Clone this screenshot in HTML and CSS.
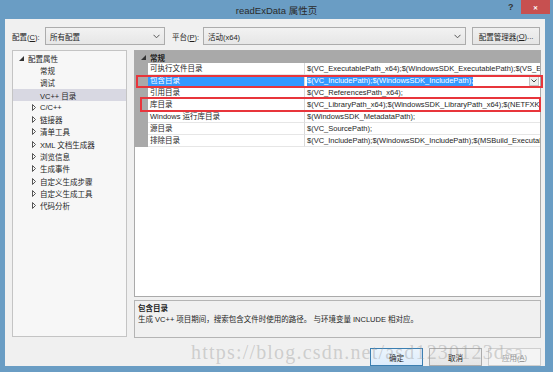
FILE: index.html
```html
<!DOCTYPE html>
<html lang="zh-CN">
  <head>
    <meta charset="UTF-8" />
    <title>readExData 属性页</title>
    <link rel="stylesheet" href="styles.css">
  </head>
  <body>
    <div class="window">
      <div class="titlebar">
        <span class="title">readExData 属性页</span>
        <span class="help">?</span>
        <span class="close">&#x2715;</span>
      </div>
      <div class="client">
        <div class="toolbar">
          <span class="label label-config">配置(<u>C</u>):</span>
          <div class="combo combo-config">
            <span>所有配置</span>
            <svg width="7" height="5" viewBox="0 0 7 5"><path d="M0.5 0.8 L3.5 3.8 L6.5 0.8" fill="none" stroke="#555" stroke-width="1"/></svg>
          </div>
          <span class="label label-platform">平台(<u>P</u>):</span>
          <div class="combo combo-platform">
            <span>活动(x64)</span>
            <svg width="7" height="5" viewBox="0 0 7 5"><path d="M0.5 0.8 L3.5 3.8 L6.5 0.8" fill="none" stroke="#555" stroke-width="1"/></svg>
          </div>
          <div class="btn btn-manager">配置管理器(<u>O</u>)...</div>
        </div>

        <div class="main">
          <div class="tree">
            <div class="node node-root">
              <svg class="exp" width="5" height="5" viewBox="0 0 5 5"><path d="M5 0 L5 5 L0 5 Z" fill="#333"/></svg>
              <span>配置属性</span>
            </div>
            <div class="node leaf">常规</div>
            <div class="node leaf">调试</div>
            <div class="node leaf selected">VC++ 目录</div>
            <div class="node"><svg class="col" width="4" height="7" viewBox="0 0 4 7"><path d="M0.5 0.5 L3.5 3.5 L0.5 6.5 Z" fill="none" stroke="#555" stroke-width="1"/></svg><span>C/C++</span></div>
            <div class="node"><svg class="col" width="4" height="7" viewBox="0 0 4 7"><path d="M0.5 0.5 L3.5 3.5 L0.5 6.5 Z" fill="none" stroke="#555" stroke-width="1"/></svg><span>链接器</span></div>
            <div class="node"><svg class="col" width="4" height="7" viewBox="0 0 4 7"><path d="M0.5 0.5 L3.5 3.5 L0.5 6.5 Z" fill="none" stroke="#555" stroke-width="1"/></svg><span>清单工具</span></div>
            <div class="node"><svg class="col" width="4" height="7" viewBox="0 0 4 7"><path d="M0.5 0.5 L3.5 3.5 L0.5 6.5 Z" fill="none" stroke="#555" stroke-width="1"/></svg><span>XML 文档生成器</span></div>
            <div class="node"><svg class="col" width="4" height="7" viewBox="0 0 4 7"><path d="M0.5 0.5 L3.5 3.5 L0.5 6.5 Z" fill="none" stroke="#555" stroke-width="1"/></svg><span>浏览信息</span></div>
            <div class="node"><svg class="col" width="4" height="7" viewBox="0 0 4 7"><path d="M0.5 0.5 L3.5 3.5 L0.5 6.5 Z" fill="none" stroke="#555" stroke-width="1"/></svg><span>生成事件</span></div>
            <div class="node"><svg class="col" width="4" height="7" viewBox="0 0 4 7"><path d="M0.5 0.5 L3.5 3.5 L0.5 6.5 Z" fill="none" stroke="#555" stroke-width="1"/></svg><span>自定义生成步骤</span></div>
            <div class="node"><svg class="col" width="4" height="7" viewBox="0 0 4 7"><path d="M0.5 0.5 L3.5 3.5 L0.5 6.5 Z" fill="none" stroke="#555" stroke-width="1"/></svg><span>自定义生成工具</span></div>
            <div class="node"><svg class="col" width="4" height="7" viewBox="0 0 4 7"><path d="M0.5 0.5 L3.5 3.5 L0.5 6.5 Z" fill="none" stroke="#555" stroke-width="1"/></svg><span>代码分析</span></div>
          </div>

          <div class="right">
            <div class="grid">
              <div class="grid-head">
                <svg class="head-exp" width="5" height="5" viewBox="0 0 5 5"><path d="M5 0 L5 5 L0 5 Z" fill="#333"/></svg>
                <span>常规</span>
              </div>
              <div class="row">
                <div class="gutter"></div>
                <div class="name">可执行文件目录</div>
                <div class="value">$(VC_ExecutablePath_x64);$(WindowsSDK_ExecutablePath);$(VS_ExecutablePath);$(MSBuild_ExecutablePath)</div>
              </div>
              <div class="row row-selected">
                <div class="gutter"></div>
                <div class="name">包含目录</div>
                <div class="value">
                  <span class="sel-text">$(VC_IncludePath);$(WindowsSDK_IncludePath);</span>
                  <span class="drop">
                    <svg width="6" height="4" viewBox="0 0 6 4"><path d="M0.5 0.5 L3 3 L5.5 0.5" fill="none" stroke="#444" stroke-width="1"/></svg>
                  </span>
                </div>
              </div>
              <div class="row">
                <div class="gutter"></div>
                <div class="name">引用目录</div>
                <div class="value">$(VC_ReferencesPath_x64);</div>
              </div>
              <div class="row">
                <div class="gutter"></div>
                <div class="name">库目录</div>
                <div class="value">$(VC_LibraryPath_x64);$(WindowsSDK_LibraryPath_x64);$(NETFXKitsDir)Lib\um\x64</div>
              </div>
              <div class="row">
                <div class="gutter"></div>
                <div class="name">Windows 运行库目录</div>
                <div class="value">$(WindowsSDK_MetadataPath);</div>
              </div>
              <div class="row">
                <div class="gutter"></div>
                <div class="name">源目录</div>
                <div class="value">$(VC_SourcePath);</div>
              </div>
              <div class="row">
                <div class="gutter"></div>
                <div class="name">排除目录</div>
                <div class="value">$(VC_IncludePath);$(WindowsSDK_IncludePath);$(MSBuild_ExecutablePath);$(VC_LibraryPath_x64)</div>
              </div>
              <div class="grid-fill"></div>
            </div>
            <div class="desc">
              <div class="desc-title">包含目录</div>
              <div class="desc-text">生成 VC++ 项目期间，搜索包含文件时使用的路径。 与环境变量 INCLUDE 相对应。</div>
            </div>
          </div>
        </div>

        <div class="buttons">
          <div class="btn btn-ok">确定</div>
          <div class="btn btn-cancel">取消</div>
          <div class="btn btn-apply">应用(<u>A</u>)</div>
        </div>
      </div>

      <div class="mark mark-include"></div>
      <div class="mark mark-lib"></div>
      <div class="watermark">https://blog.csdn.net/asd1230123dsa</div>
    </div>
  </body>
</html>
```

FILE: styles.css
```css
* {
  padding: 0;
  margin: 0;
  box-sizing: border-box;
}
body {
  width: 553px;
  height: 372px;
  overflow: hidden;
  font-family: "Liberation Sans", "Noto Sans CJK SC", sans-serif;
  font-size: 7.5px;
  color: #1e1e1e;
}
u {
  text-decoration: underline;
}
.window {
  position: relative;
  width: 553px;
  height: 372px;
  background: #6a9dc4;
  display: flex;
  flex-direction: column;
}

/* title bar */
.titlebar {
  position: relative;
  height: 19px;
  display: flex;
  justify-content: center;
  align-items: center;
}
.title {
  font-size: 9.5px;
  color: #2b2b2b;
  padding-top: 1px;
}
.help {
  position: absolute;
  left: 508px;
  top: 2px;
  font-size: 9px;
  font-weight: bold;
  color: #333;
}
.close {
  position: absolute;
  left: 521px;
  top: 0;
  width: 29px;
  height: 14px;
  background: #c75050;
  color: #fff;
  font-size: 6px;
  font-weight: bold;
  display: flex;
  justify-content: center;
  align-items: center;
}

/* client area */
.client {
  flex: 1;
  margin: 0 8px 6px 5px;
  background: #f0f0f0;
  display: flex;
  flex-direction: column;
}
.toolbar {
  display: flex;
  align-items: center;
  height: 18px;
  margin-top: 8px;
  padding-left: 7px;
}
.label {
  color: #1e1e1e;
}
.label-config {
  width: 33px;
}
.label-platform {
  margin-left: 7px;
  width: 31px;
}
.combo {
  height: 18px;
  border: 1px solid #acacac;
  background: linear-gradient(#f2f2f2, #e6e6e6);
  display: flex;
  align-items: center;
  justify-content: space-between;
  padding: 0 4px 0 4px;
}
.combo-config {
  width: 120px;
}
.combo-platform {
  width: 263px;
}
.btn {
  height: 18px;
  border: 1px solid #acacac;
  background: linear-gradient(#f0f0f0, #e5e5e5);
  display: flex;
  align-items: center;
  justify-content: center;
}
.btn-manager {
  width: 68px;
  margin-left: 6px;
}

/* main area */
.main {
  display: flex;
  margin-top: 5px;
  padding-left: 7px;
}
.tree {
  width: 115px;
  height: 287px;
  border: 1px solid #c4c4c4;
  background: #f7f7f7;
  padding-top: 1px;
}
.node {
  height: 12.3px;
  display: flex;
  align-items: center;
  padding-left: 19px;
}
.node span {
  margin-left: 4px;
}
.node-root {
  padding-left: 6px;
}
.node-root span {
  margin-left: 4px;
}
.leaf {
  padding-left: 27px;
}
.selected {
  background: #d8d8e2;
}
.col {
  flex-shrink: 0;
}

.right {
  width: 407px;
  margin-left: 7px;
  display: flex;
  flex-direction: column;
}
.grid {
  height: 247px;
  border: 1px solid #aaa;
  background: #fff;
  display: flex;
  flex-direction: column;
}
.grid-head {
  height: 12px;
  background: #a9a9a9;
  display: flex;
  align-items: center;
  padding-left: 6px;
  font-weight: bold;
  flex-shrink: 0;
}
.grid-head span {
  margin-left: 4px;
}
.row {
  display: grid;
  grid-template-columns: 13px 157px 1fr;
  height: 12px;
  flex-shrink: 0;
}
.gutter {
  background: #a9a9a9;
}
.name {
  padding-left: 2px;
  border-bottom: 1px solid #e6e6e6;
  border-right: 1px solid #d9d9d9;
  white-space: nowrap;
  overflow: hidden;
  line-height: 11px;
}
.value {
  padding-left: 2px;
  border-bottom: 1px solid #e6e6e6;
  white-space: nowrap;
  overflow: hidden;
  line-height: 11px;
}
.row-selected .name {
  background: #3399ff;
  color: #fff;
}
.row-selected .value {
  display: flex;
  align-items: center;
  justify-content: space-between;
  padding-right: 1px;
}
.sel-text {
  background: #3399ff;
  color: #fff;
  line-height: 10px;
}
.drop {
  width: 10px;
  height: 10px;
  border: 1px solid #c3c3c3;
  background: #eee;
  display: flex;
  align-items: center;
  justify-content: center;
}
.grid-fill {
  flex: 1;
  background: #fff;
}
.desc {
  height: 38px;
  margin-top: 3px;
  border: 1px solid #b4b4b4;
  background: #f0f0f0;
  padding: 2px 0 0 3px;
}
.desc-title {
  font-weight: bold;
  line-height: 11px;
}
.desc-text {
  line-height: 12px;
}

/* bottom buttons */
.buttons {
  display: flex;
  justify-content: flex-end;
  margin-top: 10px;
  padding-right: 4px;
  gap: 6px;
}
.btn-ok,
.btn-cancel,
.btn-apply {
  width: 53px;
}
.btn-ok {
  border-color: #3c7fb1;
  background: linear-gradient(#ecf4fc, #dcecfc);
}
.btn-apply {
  color: #9a9a9a;
  border-color: #cfcfcf;
  background: #f4f4f4;
}

/* annotations */
.mark {
  position: absolute;
  border: 2px solid #e8353b;
}
.mark-include {
  left: 136px;
  top: 75px;
  width: 407px;
  height: 13px;
}
.mark-lib {
  left: 140px;
  top: 97px;
  width: 401px;
  height: 15px;
}
.watermark {
  position: absolute;
  left: 191px;
  top: 341px;
  font-family: "Liberation Serif", serif;
  font-size: 20px;
  letter-spacing: 1.2px;
  color: rgba(150, 150, 150, 0.4);
  white-space: nowrap;
}
```
